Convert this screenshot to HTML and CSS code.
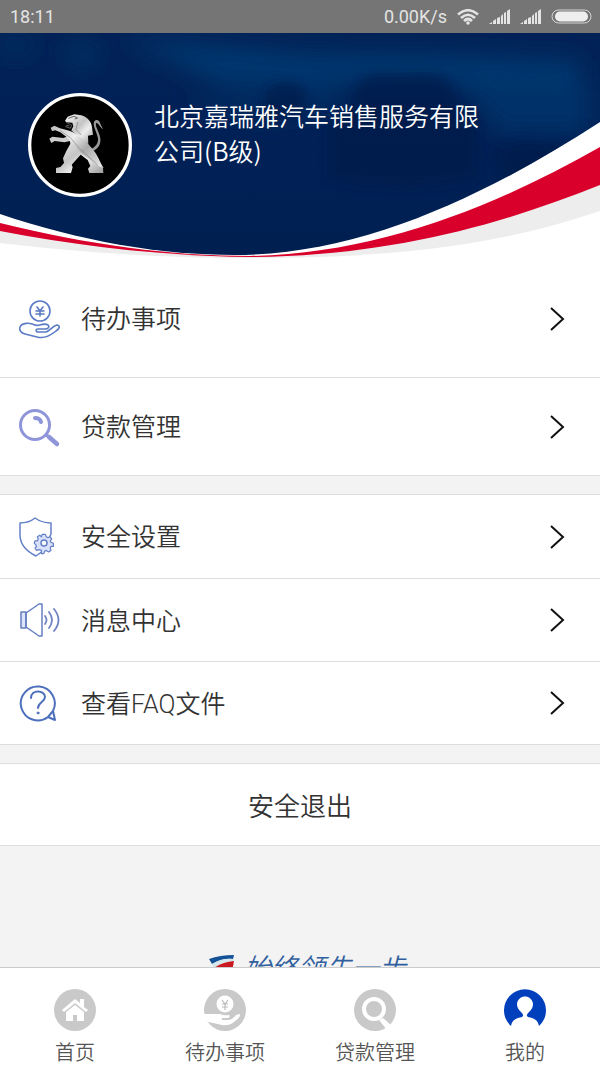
FILE: index.html
```
<!DOCTYPE html>
<html lang="zh-CN">
<head>
<meta charset="utf-8">
<meta name="viewport" content="width=device-width, initial-scale=1">
<title>我的</title>
<link rel="stylesheet" href="styles.css">
</head>
<body>
<header class="status-bar">
    <span>18:11</span>
    <div class="status-right">
        <span>0.00K/s</span>
        <svg width="22" height="16" viewBox="0 0 22 16" fill="none" stroke="#e4e4e4" stroke-width="2.600">
            <path d="M1 5.500Q11-3 21 5.500M4 9Q11 2.500 18 9M7 12Q11 8 15 12"/>
            <circle cx="11" cy="14" r="1.800" fill="#e4e4e4" stroke="none"/>
        </svg>
        <svg class="signal" width="21" height="15" viewBox="0 0 21 15" fill="#e4e4e4">
            <path d="M0 15l3-2v2zM4 15v-3l3-2v5zM8 15V9l3-1v7zM12 15V7l2-2v10zM15 15V4l2-1v12zM18 15V2l3-2v15z"/>
        </svg>
        <svg class="signal" width="21" height="15" viewBox="0 0 21 15" fill="#e4e4e4">
            <path d="M0 15l3-2v2zM4 15v-3l3-2v5zM8 15V9l3-1v7zM12 15V7l2-2v10zM15 15V4l2-1v12zM18 15V2l3-2v15z"/>
        </svg>
        <svg width="41" height="15" viewBox="0 0 41 15">
            <rect x="1" y="1" width="39" height="13" rx="6.500" fill="none" stroke="#d4d4d4"/>
            <rect x="4" y="2.500" width="33" height="10" rx="5" fill="#eee"/>
        </svg>
    </div>
</header>

<main class="page">
    <section class="hero">
        <svg class="hero-bg" viewBox="0 0 600 227" preserveAspectRatio="none">
            <defs>
                <clipPath id="curve"><path d="M0 0H600V89C490 160 365 222 235 222C160 222 80 208 0 181z"/></clipPath>
                <filter id="soft" x="-30%" y="-30%" width="160%" height="160%"><feGaussianBlur stdDeviation="12"/></filter>
                <filter id="soft-car" x="-30%" y="-30%" width="160%" height="160%"><feGaussianBlur stdDeviation="5"/></filter>
                <linearGradient id="sky" x1="0" y1="0" x2="0" y2="1">
                    <stop offset="0" stop-color="#012257"/>
                    <stop offset=".6" stop-color="#012156"/>
                    <stop offset="1" stop-color="#001f50"/>
                </linearGradient>
            </defs>
            <path d="M0 190C90 212 170 223 250 223C380 223 500 190 600 152V178C500 212 400 225 250 225C150 225 70 218 0 210z" fill="#ededed"/>
            <path d="M0 190C90 212 170 223 250 223C380 221 500 171 600 114V152C500 192 390 223 250 224C160 223 80 213 0 198z" fill="#d9002b"/>
            <g clip-path="url(#curve)">
                <path d="M0 0H600V227H0z" fill="url(#sky)"/>
                <g filter="url(#soft)">
                    <path d="M120 5L300 20L450 22L580 28V50L400 50L220 50z" fill="#00396f"/>
                    <path d="M460 50H590V100H500z" fill="#003069"/>
                    <path d="M180 70L330 45L350 75L260 85z" fill="#00346a" opacity=".6"/>
                    <ellipse cx="82" cy="22" rx="14" ry="8" fill="#073d70"/>
                    <ellipse cx="15" cy="12" rx="20" ry="8" fill="#003064"/>
                </g>
                <g filter="url(#soft-car)" fill="#001c4b" opacity=".7">
                    <path d="M350 75Q358 43 372 42L430 41Q450 42 456 66L478 92V146Q400 164 328 146V96z"/>
                    <path d="M265 60Q272 48 295 50L308 62L302 78L262 90z"/>
                    <path d="M490 118L520 108L600 114V125L510 155z"/>
                </g>
            </g>
        </svg>
        <div class="dealer">
            <svg class="avatar" viewBox="24 24 312 312" role="img" aria-label="标志">
                <defs>
                    <linearGradient id="metal" x1="0" y1="0" x2="1" y2="1">
                        <stop offset="0" stop-color="#f8f8f8"/>
                        <stop offset=".45" stop-color="#c4c4c4"/>
                        <stop offset=".65" stop-color="#eee"/>
                        <stop offset="1" stop-color="#999"/>
                    </linearGradient>
                    <linearGradient id="metal-arm" x1="0" y1="0" x2="1" y2="1">
                        <stop offset="0" stop-color="#bbb"/>
                        <stop offset=".35" stop-color="#eee"/>
                        <stop offset=".6" stop-color="#aaa"/>
                        <stop offset="1" stop-color="#eee"/>
                    </linearGradient>
                </defs>
                <circle cx="180" cy="180" r="151" fill="#000" stroke="#fff" stroke-width="10"/>
                <path d="M211 194C228 185 235 175 234 160C230 140 218 123 222 110C227 101 239 104 241 116L249 133C240 127 235 112 228 114C225 127 240 144 241 161C243 180 233 192 217 199z" fill="#999"/>
                <path d="M135 107L143 95L163 88L184 91C202 96 214 109 216 127L219 149L204 152L205 176L177 158L154 136L160 124L157 113L139 112z" fill="url(#metal)"/>
                <path d="M145 100L162 94L173 99L164 102M139 112L149 118L155 121L151 130L137 125L140 121L148 123" fill="none" stroke="#666" stroke-width="3"/>
                <path d="M173 111L168 134L184 150" fill="none" stroke="#999" stroke-width="3"/>
                <path d="M88 161L97 155L130 159L151 151L161 166L133 172L104 168L94 174z" fill="#ccc"/>
                <path d="M147 154L151 176L139 198L129 220L132 234L121 246L108 249V264H153L158 247L155 239L182 209L203 225L211 243L204 251L208 264H250L249 249L240 231L202 175z" fill="url(#metal)"/>
                <path d="M92 128L103 122L120 130L148 137C177 148 207 175 225 202C238 221 241 236 251 249L235 243C210 225 186 207 167 187L143 158L121 142L106 136L96 138z" fill="url(#metal-arm)"/>
                <path d="M120 137L150 157L178 190L233 240" fill="none" stroke="#888" stroke-width="2"/>
            </svg>
            <h1 class="dealer-name">北京嘉瑞雅汽车销售服务有限公司(B级)</h1>
        </div>
    </section>

    <nav class="menu">
        <a class="menu-item menu-item-first" href="#todo">
            <svg class="menu-icon" viewBox="0 0 42 42" fill="none" stroke="#5b7bc5" stroke-width="1.600" stroke-linejoin="round" stroke-linecap="round">
                <circle cx="21" cy="13" r="10"/>
                <path d="M18 9l3 4 3-4M21 13v5M17 13h8M17 16h8"/>
                <path d="M1 29C3 25 10 24 16 27C20 29 24 24 29 27C31 29 29 31 26 31H19C16 31 17 34 19 34H27C31 33 33 28 38 27C42 28 40 31 37 33C31 38 25 41 18 39L6 36C2 35 0 32 1 29z"/>
            </svg>
            <span class="menu-text">待办事项</span>
            <svg class="arrow" viewBox="0 0 16 26"><path d="M2 2l12 11L2 24"/></svg>
        </a>
        <a class="menu-item menu-item-tall" href="#loan">
            <svg class="menu-icon" viewBox="0 0 42 42" fill="none" stroke="#8f95d9" stroke-linecap="round">
                <circle cx="16" cy="19" r="14.500" stroke-width="3"/>
                <path d="M16 12Q21 12 22 16" stroke-width="4"/>
                <path d="M27 29l3 2" stroke-width="3"/>
                <path d="M30 31L38 38" stroke-width="4.500"/>
            </svg>
            <span class="menu-text">贷款管理</span>
            <svg class="arrow" viewBox="0 0 16 26"><path d="M2 2l12 11L2 24"/></svg>
        </a>
    </nav>

    <nav class="menu">
        <a class="menu-item" href="#safe">
            <svg class="menu-icon" viewBox="0 0 42 42" fill="none" stroke="#6380c7" stroke-width="1.500" stroke-linejoin="round">
                <path d="M16 2Q10 7 1 7V19C1 30 9 36 17 40Q21 37 24 35L32 18V7Q23 7 16 2z"/>
                <path d="M24 18h4l1 3 2 1 3-1 2 3-2 2 1 2 3 1v4h-3l-1 2 1 3-3 2-3-2-2 1-1 3h-3v-4l-3-1-3 1-2-3 2-2-1-2-2-2 1-3h3l1-2-1-3 3-2 2 2z" fill="#d9e2fa" stroke-width="1.500" transform="translate(4 4) scale(.8)"/>
                <circle cx="25" cy="27" r="3" fill="#fff"/>
            </svg>
            <span class="menu-text">安全设置</span>
            <svg class="arrow" viewBox="0 0 16 26"><path d="M2 2l12 11L2 24"/></svg>
        </a>
        <a class="menu-item" href="#message">
            <svg class="menu-icon" viewBox="0 0 42 42" fill="none" stroke="#657fc4" stroke-width="1.500" stroke-linejoin="round" stroke-linecap="round">
                <path d="M2 13h5v16H2z" fill="#dce5fb"/>
                <path d="M7 14L20 5H23V37H20L7 28z"/>
                <path d="M26 17Q29 21 26 25M30 13Q36 21 30 29M35 10Q44 21 35 32" stroke="#7184c5" stroke-width="1.800"/>
            </svg>
            <span class="menu-text">消息中心</span>
            <svg class="arrow" viewBox="0 0 16 26"><path d="M2 2l12 11L2 24"/></svg>
        </a>
        <a class="menu-item" href="#faq">
            <svg class="menu-icon" viewBox="0 0 42 42" fill="none" stroke="#4e70bc" stroke-width="2" stroke-linecap="round" stroke-linejoin="round">
                <path d="M29 35A17 17 0 1 1 34 29L36 38L29 35L34 29"/>
                <path d="M12 16C12 7 26 8 26 15C26 20 19 20 19 26"/>
                <circle cx="19" cy="31" r="1" fill="#4e70bc" stroke-width="1"/>
            </svg>
            <span class="menu-text">查看FAQ文件</span>
            <svg class="arrow" viewBox="0 0 16 26"><path d="M2 2l12 11L2 24"/></svg>
        </a>
    </nav>

    <button class="logout" type="button">安全退出</button>

    <div class="slogan">
        <svg width="28" height="22" viewBox="0 0 28 22">
            <path d="M1 4Q12 0 26 0L25 4Q14 3 4 9z" fill="#155196"/>
            <path d="M4 9Q14 3 25 4L26 6Q15 6 6 13z" fill="#d3e7ed"/>
            <path d="M6 13Q14 7 26 6L24 17L10 22z" fill="#cb1922"/>
        </svg>
        <span>始终领先一步</span>
    </div>
</main>

<nav class="tab-bar">
    <a class="tab" href="#home">
        <svg class="tab-icon" viewBox="0 0 42 42">
            <circle cx="21" cy="21" r="21" fill="#c9c9c9"/>
            <path d="M8 21L21 10L26 14V10H30V18L34 21L32 23L21 14L10 23z" fill="#fff"/>
            <path d="M12 23L21 16L30 23V32H23V26H19V32H12z" fill="#fff"/>
        </svg>
        <span>首页</span>
    </a>
    <a class="tab" href="#todo">
        <svg class="tab-icon" viewBox="0 0 42 42">
            <circle cx="21" cy="21" r="21" fill="#c9c9c9"/>
            <circle cx="21" cy="15" r="8.500" fill="#fff"/>
            <path d="M18 11l3 4 3-4M21 15v6M18 15h6M18 18h6" fill="none" stroke="#bbb" stroke-width="1.200"/>
            <path d="M0 25H16Q20 27 25 26Q27 28 24 29H18V31H25Q29 30 32 26L36 25Q37 28 30 33Q25 37 18 36Q10 34 4 33Q1 31 0 25z" fill="#fff"/>
        </svg>
        <span>待办事项</span>
    </a>
    <a class="tab" href="#loan">
        <svg class="tab-icon" viewBox="0 0 42 42">
            <circle cx="21" cy="21" r="21" fill="#c9c9c9"/>
            <circle cx="20" cy="20" r="10" fill="none" stroke="#fff" stroke-width="4"/>
            <path d="M25 31L29 29L37 36L33 41z" fill="#fff"/>
        </svg>
        <span>贷款管理</span>
    </a>
    <a class="tab" href="#mine">
        <svg class="tab-icon" viewBox="0 0 42 42">
            <path d="M7 37A21 21 0 1 1 35 37C34 31 30 29 24 28C22 27 23 25 25 23C28 20 29 18 29 15C28 5 14 5 13 15C13 18 14 20 17 23C19 25 20 27 18 28C12 29 8 31 7 37z" fill="#0040bd"/>
        </svg>
        <span>我的</span>
    </a>
</nav>
</body>
</html>
```
FILE: styles.css
```
* {
    box-sizing: border-box;
}

html, body {
    height: 100%;
}

body {
    margin: 0;
    display: flex;
    flex-direction: column;
    background: #f3f3f4;
    color: #333;
    font-family: Roboto, "Noto Sans CJK SC", sans-serif;
    font-weight: 350;
}

a {
    color: inherit;
    text-decoration: none;
}

svg {
    flex: none;
}

.status-bar {
    display: flex;
    justify-content: space-between;
    align-items: center;
    flex: none;
    height: 33px;
    padding: 0 8px 0 10px;
    background: #757575;
    color: #e4e4e4;
    font-size: 18px;
    font-weight: 400;
}

.status-right {
    display: flex;
    align-items: center;
    gap: 10px;
}

.page {
    flex: 1;
    min-height: 0;
    overflow: hidden;
}

.hero {
    display: grid;
    background: #fff;
}

.hero-bg {
    grid-area: 1 / 1;
    width: 100%;
    height: 227px;
}

.dealer {
    grid-area: 1 / 1;
    z-index: 1;
    display: flex;
    align-items: flex-start;
    gap: 22px;
    padding: 60px 112px 0 28px;
}

.avatar {
    width: 104px;
    height: 104px;
}

.dealer-name {
    margin: 5px 0 0;
    color: #fff;
    font-family: "Noto Sans CJK SC", sans-serif;
    font-size: 25px;
    font-weight: 350;
    line-height: 35px;
}

.menu {
    margin-bottom: 18px;
    background: #fff;
    border-bottom: 1px solid #dedede;
}

.menu + .menu {
    border-top: 1px solid #dedede;
}

.menu-item {
    display: flex;
    align-items: center;
    height: 83px;
    padding: 0 35px 0 19px;
    font-size: 25px;
}

.menu-item + .menu-item {
    border-top: 1px solid #dedede;
}

.menu-item-first {
    height: 117px;
}

.menu-item-tall {
    height: 98px;
}

.menu-icon {
    width: 42px;
    height: 42px;
    margin-right: 20px;
}

.menu-text {
    flex: 1;
    padding-bottom: 3px;
}

.arrow {
    width: 16px;
    height: 26px;
    fill: none;
    stroke: #111;
    stroke-width: 2;
}

.logout {
    display: block;
    width: 100%;
    height: 83px;
    padding: 0;
    background: #fff;
    border: solid #dedede;
    border-width: 1px 0;
    color: #333;
    font: inherit;
    font-size: 26px;
}

.slogan {
    display: flex;
    justify-content: center;
    align-items: flex-start;
    gap: 8px;
    padding: 109px 0 0 14px;
    color: #315f9e;
    font-size: 27px;
    font-style: italic;
    line-height: 28px;
}

.tab-bar {
    display: flex;
    flex: none;
    height: 100px;
    background: #fff;
    border-top: 1px solid #ccc;
}

.tab {
    display: flex;
    flex: 1;
    flex-direction: column;
    align-items: center;
    gap: 6px;
    padding-top: 21px;
    color: #555;
    font-size: 20px;
    line-height: 32px;
}

.tab-icon {
    width: 42px;
    height: 42px;
}
```
